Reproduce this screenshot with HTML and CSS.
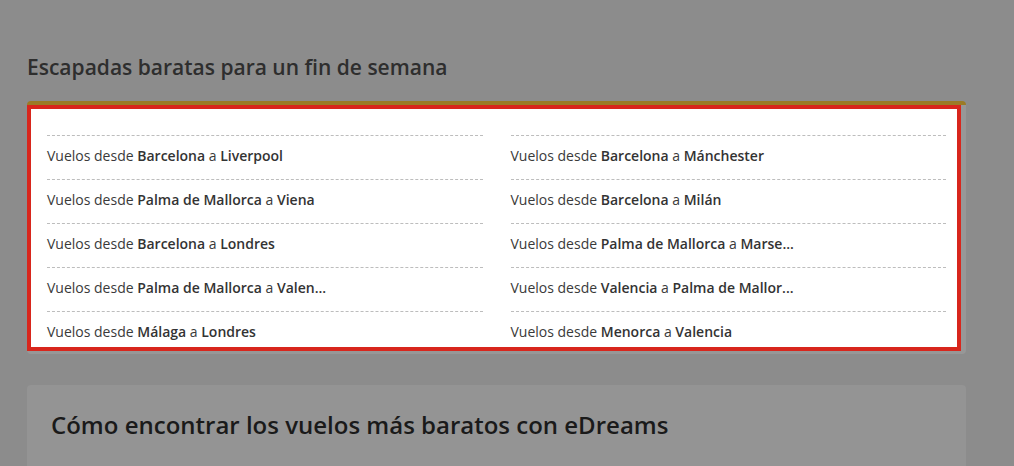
FILE: index.html
```html
<!DOCTYPE html>
<html lang="es">
<head>
    <meta charset="UTF-8">
    <meta name="viewport" content="width=device-width, initial-scale=1.0">
    <title>Vuelos baratos - eDreams</title>
    <link rel="stylesheet" href="styles.css">
</head>
<body>
    <div class="page">
        <h2 class="section-title">Escapadas baratas para un fin de semana</h2>
        <div class="escapes">
            <div class="highlight"></div>
            <ul class="routes">
                <li>Vuelos desde <b>Barcelona</b> a <b>Liverpool</b></li>
                <li>Vuelos desde <b>Barcelona</b> a <b>Mánchester</b></li>
                <li>Vuelos desde <b>Palma de Mallorca</b> a <b>Viena</b></li>
                <li>Vuelos desde <b>Barcelona</b> a <b>Milán</b></li>
                <li>Vuelos desde <b>Barcelona</b> a <b>Londres</b></li>
                <li>Vuelos desde <b>Palma de Mallorca</b> a <b>Marse...</b></li>
                <li>Vuelos desde <b>Palma de Mallorca</b> a <b>Valen...</b></li>
                <li>Vuelos desde <b>Valencia</b> a <b>Palma de Mallor...</b></li>
                <li>Vuelos desde <b>Málaga</b> a <b>Londres</b></li>
                <li>Vuelos desde <b>Menorca</b> a <b>Valencia</b></li>
            </ul>
        </div>
        <div class="tips">
            <h2 class="tips-title">Cómo encontrar los vuelos más baratos con eDreams</h2>
        </div>
    </div>
</body>
</html>
```

FILE: styles.css
```css
body {
    margin: 0;
    background-color: #8c8c8c;
    font-family: "Open Sans", Arial, sans-serif;
    color: #2f2f2f;
    overflow: hidden;
}
.page {
    width: 939px;
    padding: 55px 0 0 27px;
}
.section-title {
    margin: 0 0 22px 0;
    font-size: 21px;
    font-weight: 600;
    line-height: 24px;
    color: #2e2e2e;
}
.escapes {
    position: relative;
    background-color: #979797;
    border-top: 4px solid #9b7b26;
    border-radius: 4px;
    padding: 30px 20px 6px 20px;
}
/* white frame that marks the block */
.highlight {
    position: absolute;
    top: 0;
    left: 0;
    right: 5px;
    bottom: 3px;
    background-color: white;
    border: 4px solid #d8261c;
}
.routes {
    position: relative;
    list-style: none;
    margin: 0;
    padding: 0;
    display: grid;
    grid-template-columns: 1fr 1fr;
    column-gap: 28px;
    row-gap: 7px;
}
.routes li {
    border-top: 1px dashed #bdbdbd;
    padding: 8px 0 4px 0;
    font-size: 14px;
    line-height: 24px;
    color: #3a3a3a;
    white-space: nowrap;
}
.routes b {
    font-weight: 600;
    color: #333;
}
.tips {
    margin-top: 31px;
    background-color: #949494;
    border-radius: 4px;
    padding: 24px 24px 30px 24px;
}
.tips-title {
    margin: 0;
    font-size: 24px;
    font-weight: 600;
    line-height: 32px;
    color: #1a1a1a;
}
```
